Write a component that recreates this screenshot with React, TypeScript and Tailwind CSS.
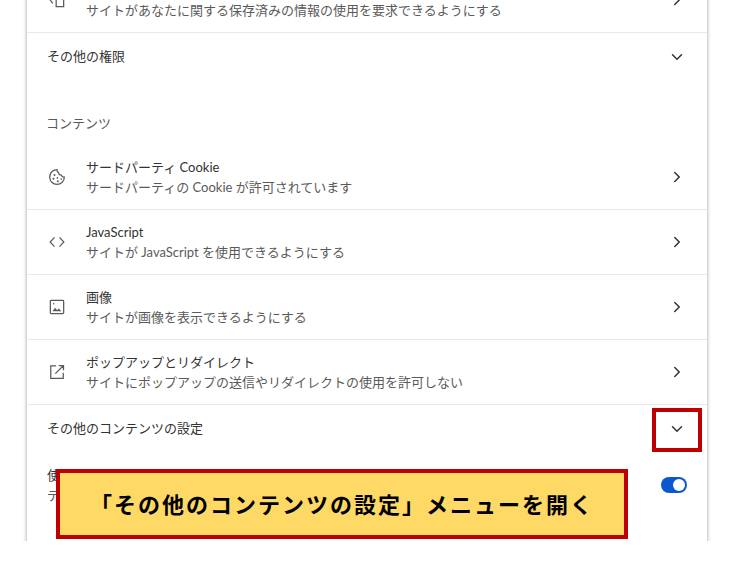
import { ChevronDown, ChevronRight } from "lucide-react";
import type { ReactNode } from "react";

const font = "font-['Lato','Noto_Sans_CJK_JP',sans-serif]";

function CookieIcon() {
  return (
    <svg width="20" height="20" viewBox="0 0 24 24" fill="none" stroke="#5a5a5a" strokeWidth="1.500">
      <path d="M12 3.200a8.800 8.800 0 1 0 8.800 8.800c-1.800.2-3.200-.6-3.600-2.300-1.900.2-3.400-1-3.400-3-1.300-.4-1.900-1.900-1.800-3.500Z" />
      <circle cx="9" cy="9.500" r="1.200" fill="#5a5a5a" stroke="none" />
      <circle cx="7.800" cy="14" r="1.200" fill="#5a5a5a" stroke="none" />
      <circle cx="12.500" cy="13" r="1.100" fill="#5a5a5a" stroke="none" />
      <circle cx="13" cy="17.200" r="1.200" fill="#5a5a5a" stroke="none" />
      <circle cx="17" cy="14.500" r="1" fill="#5a5a5a" stroke="none" />
    </svg>
  );
}

function CodeIcon() {
  return (
    <svg width="20" height="20" viewBox="0 0 24 24" fill="none" stroke="#5a5a5a" strokeWidth="1.500">
      <path d="M9 6.500 3.800 12 9 17.500M15 6.500l5.200 5.500-5.200 5.500" />
    </svg>
  );
}

function ImageIcon() {
  return (
    <svg width="20" height="20" viewBox="0 0 24 24" fill="none" stroke="#5a5a5a" strokeWidth="1.500">
      <rect x="4" y="4" width="16" height="16" rx="1" />
      <path d="M6.500 17l3.200-4.200 2.500 3 1.800-2 3.500 3.200Z" fill="#5a5a5a" stroke="none" />
      <circle cx="8" cy="8" r="0.900" fill="#5a5a5a" stroke="none" />
    </svg>
  );
}

function OpenIcon() {
  return (
    <svg width="20" height="20" viewBox="0 0 24 24" fill="none" stroke="#5a5a5a" strokeWidth="1.500">
      <path d="M11 4.500H4.500v15h15V13M14 4.200h5.800V10M19.500 4.500 10 14" />
    </svg>
  );
}

function LinkRow({ icon, title, sub }: { icon: ReactNode; title?: string; sub: string }) {
  return (
    <div className="h-[65px] flex items-center border-b border-[#e9e9e9]">
      <div className="w-[20px] ml-[20px] mr-[19px] flex justify-center">{icon}</div>
      <div className="flex-1 min-w-0">
        <div className="h-[20px] text-[13px] leading-[20px] text-[#333333]">{title}</div>
        <div className="text-[13px] leading-[20px] text-[#5a5a5a]">{sub}</div>
      </div>
      <ChevronRight size={18} strokeWidth={2} className="text-[#333333] mr-[21px]" />
    </div>
  );
}

export default function App() {
  return (
    <div className={`relative h-[581px] w-[730px] overflow-hidden bg-white ${font}`}>
      <div className="h-[541px] overflow-hidden px-[27px]">
        <div className="h-[600px] w-[680px] bg-white shadow-[0_0_4px_rgba(0,0,0,0.4)]">
          <div className="-mt-[32px]">
            <LinkRow
              icon={
                <svg width="20" height="20" viewBox="0 0 24 24" fill="none" stroke="#5a5a5a" strokeWidth="1.500">
                  <path d="M7 6 3 11l4 5M11 9h9v11h-9Z" />
                </svg>
              }
              sub="サイトがあなたに関する保存済みの情報の使用を要求できるようにする"
            />
          </div>

          <div className="h-[48px] flex items-center justify-between pl-[20px] pr-[21px]">
            <span className="text-[13px] text-[#333333]">その他の権限</span>
            <ChevronDown size={18} strokeWidth={2} className="text-[#333333]" />
          </div>

          <div className="h-[64px] flex items-end pl-[19px] pb-[12px] text-[13px] leading-[20px] text-[#5a5a5a]">
            コンテンツ
          </div>

          <LinkRow icon={<CookieIcon />} title="サードパーティ Cookie" sub="サードパーティの Cookie が許可されています" />
          <LinkRow icon={<CodeIcon />} title="JavaScript" sub="サイトが JavaScript を使用できるようにする" />
          <LinkRow icon={<ImageIcon />} title="画像" sub="サイトが画像を表示できるようにする" />
          <LinkRow icon={<OpenIcon />} title="ポップアップとリダイレクト" sub="サイトにポップアップの送信やリダイレクトの使用を許可しない" />

          <div className="h-[48px] flex items-center justify-between pl-[20px] pr-[21px]">
            <span className="text-[13px] text-[#333333]">その他のコンテンツの設定</span>
            <ChevronDown size={18} strokeWidth={2} className="text-[#333333]" />
          </div>

          <div className="h-[64px] flex items-center justify-between pl-[20px] pr-[20px]">
            <div>
              <div className="text-[13px] leading-[20px] text-[#333333]">使</div>
              <div className="text-[13px] leading-[20px] text-[#5a5a5a]">デ</div>
            </div>
            <div className="relative h-[16px] w-[26px] rounded-full bg-[#0b57d0]">
              <div className="absolute right-[2px] top-[2px] h-[12px] w-[12px] rounded-full bg-white" />
            </div>
          </div>
        </div>
      </div>

      <div className="absolute left-[652px] top-[408px] h-[44px] w-[50px] border-[4px] border-[#c00000]" />
      <div className="absolute left-[56px] top-[469px] h-[70px] w-[572px] flex items-center justify-center border-[4px] border-[#c00000] bg-[#ffd966] text-[22px] font-bold tracking-[2px] text-black">
        「その他のコンテンツの設定」メニューを開く
      </div>
    </div>
  );
}
